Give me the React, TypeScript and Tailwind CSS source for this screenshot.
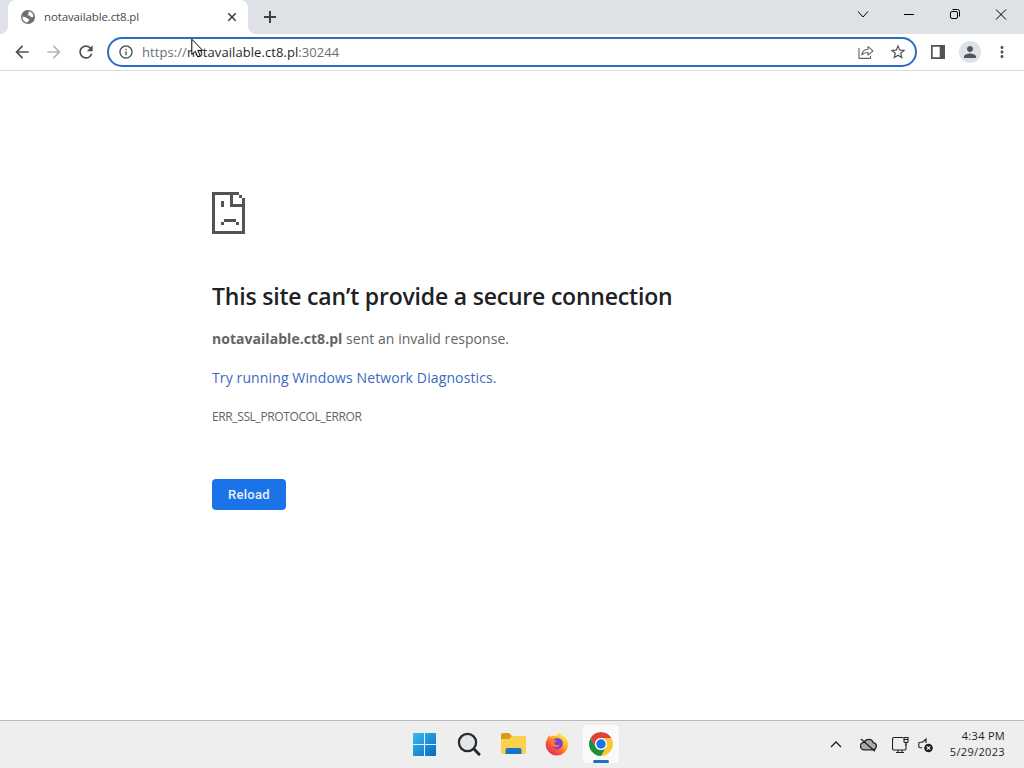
import type { ReactNode } from 'react';
import { MdArrowBack, MdArrowForward, MdRefresh, MdStarBorder, MdPerson, MdMoreVert, MdInfoOutline } from 'react-icons/md';

function WindowControls() {
  return (
    <div className="ml-auto flex h-7 items-center text-black">
      <svg className="w-[46px] h-7" viewBox="0 0 46 28" fill="none" stroke="currentColor">
        <path d="M18 11.5l5 5.5 5-5.5" />
      </svg>
      <svg className="w-[46px] h-7" viewBox="0 0 46 28" fill="none" stroke="currentColor">
        <path d="M18 14.5h10" />
      </svg>
      <svg className="w-[46px] h-7" viewBox="0 0 46 28" fill="none" stroke="currentColor">
        <rect x="18.5" y="11.5" width="7" height="7" rx="1.5" />
        <path d="M20.5 9.5h5a2 2 0 0 1 2 2v5" />
      </svg>
      <svg className="w-[46px] h-7" viewBox="0 0 46 28" fill="none" stroke="currentColor">
        <path d="M18 9.5l10 10M28 9.5l-10 10" />
      </svg>
    </div>
  );
}

function GlobeIcon() {
  return (
    <svg className="size-4" viewBox="0 0 16 16">
      <circle cx="8" cy="8" r="7" fill="#6b6f73" />
      <path d="M8.500 2.500c2.500 0 4.800 2 5 5-.7.7-1.700.9-2.500.5-.8-.5-.6-1.300-1.500-1.500-.8-.1-1.600.1-1.700-.8 0-.8.8-.8 1-1.500.1-.6-.5-1-.3-1.700z" fill="#fff" />
      <path d="M2.300 7.800c1.500-.2 2.800 0 4 .6.900.5 1.100 1.300 2.200 1.500.9.200 1 .9.600 1.500-.5.700-1.300.6-1.500 1.300-.1.400-.1.700-.2 1A5.800 5.800 0 0 1 2.300 7.800z" fill="#fff" />
    </svg>
  );
}

function TabStrip() {
  return (
    <div className="flex h-[34px] bg-[#dee1e6]">
      <div className="w-2 bg-white">
        <div className="h-full rounded-br-lg bg-[#dee1e6]" />
      </div>
      <div className="flex w-60 items-center rounded-t-lg bg-white pl-3 pr-[10px]">
        <GlobeIcon />
        <span className="ml-2 whitespace-nowrap font-['Open_Sans',sans-serif] text-[11.5px] tracking-[-0.12px] text-[#45494d]">
          notavailable.ct8.pl
        </span>
        <svg className="ml-auto size-3" viewBox="0 0 12 12" fill="none" stroke="#3c4043" strokeWidth="1.6">
          <path d="M2.300 2.300l7.400 7.400M9.700 2.300l-7.400 7.400" />
        </svg>
      </div>
      <div className="w-2 bg-white">
        <div className="h-full rounded-bl-lg bg-[#dee1e6]" />
      </div>
      <svg className="ml-2 mt-[11px] size-3" viewBox="0 0 12 12" stroke="#3c4043" strokeWidth="2">
        <path d="M6 0v12M0 6h12" />
      </svg>
      <WindowControls />
    </div>
  );
}

function Toolbar() {
  return (
    <div className="flex h-[37px] items-center border-b border-[#d8dadd] bg-white pl-3 text-[#4d5155]">
      <MdArrowBack className="size-5" />
      <MdArrowForward className="ml-3 size-5 text-[#b4b6b8]" />
      <MdRefresh className="ml-3 size-5" />
      <div className="ml-[11px] flex h-[30px] w-[810px] items-center rounded-full border-2 border-[#2b6cc4] pl-[9px] pr-2">
        <MdInfoOutline className="size-4" />
        <span className="ml-2 mt-px whitespace-nowrap font-['Open_Sans',sans-serif] text-[13px] tracking-[0.07px] text-[#6a6e72]">
          https://<span className="text-[#26282b]">notavailable.ct8.pl</span>:30244
        </span>
        <svg className="ml-auto h-4 w-4" viewBox="0 0 16 16" fill="none" stroke="#5f6368" strokeWidth="1.1">
          <path d="M1 4v10.400h11.500v-2.500" />
          <path d="M3.800 11c.4-3.700 2.700-5.600 6.200-5.700V2.600l5 4.300-5 4.300V8.500C7 8.500 5.300 9.200 3.800 11z" strokeLinejoin="round" />
        </svg>
        <MdStarBorder className="ml-[15px] size-[18px]" />
      </div>
      <svg className="ml-[14px] h-[14px] w-[14px]" viewBox="0 0 14 14">
        <path d="M0 0h14v14H0zM1.700 1.700v10.600h7V1.700z" fill="#505458" fillRule="evenodd" />
      </svg>
      <div className="ml-[14px] flex size-[22px] items-center justify-center rounded-full bg-[#dee1e6]">
        <MdPerson className="size-[18px] text-[#4d5663]" />
      </div>
      <MdMoreVert className="ml-3 size-[18px]" />
    </div>
  );
}

function Cursor() {
  return (
    <svg className="absolute left-[191px] top-[38px] h-[21px] w-[13px]" viewBox="0 0 13 21">
      <path d="M.8 1.200v15.300l3.500-3.300 2.400 5.600 2.500-1.100-2.400-5.300h4.900z" fill="#fff" stroke="#000" />
    </svg>
  );
}

function SadPage() {
  return (
    <svg className="h-[42px] w-[33px]" viewBox="0 0 11 14" fill="#535353" shapeRendering="crispEdges">
      <path d="M0 0h9v1H7v3h3V2h1v12H0zM1 1v12h9V5H6V1zM9 1h1v1H9zM3 3h1v2H3zM4 9h4v1H4zM3 10h1v1H3zM8 10h1v1H8z" fillRule="evenodd" />
    </svg>
  );
}

function ErrorPage() {
  return (
    <main className="h-[649px] bg-white pl-[212px] pt-[121px] font-['Open_Sans',sans-serif] text-[#646464]">
      <SadPage />
      <h1 className="mt-[46px] w-max text-[23px] font-semibold leading-[32px] tracking-[-0.2px] text-[#202124]">
        This site can’t provide a secure connection
      </h1>
      <p className="mt-[15px] w-max text-[14px] leading-6 tracking-[0.04px]">
        <strong className="font-bold">notavailable.ct8.pl</strong> sent an invalid response.
      </p>
      <p className="mt-[15px] w-max text-[14px] leading-6 tracking-[0.12px] text-[#3d68c0]">
        Try running Windows Network Diagnostics.
      </p>
      <p className="mt-[15px] w-max text-[12px] leading-6 tracking-[-0.38px]">ERR_SSL_PROTOCOL_ERROR</p>
      <button className="mt-[50px] block h-[31px] w-[74px] rounded bg-[#1a73e8] font-[Roboto,sans-serif] text-[13px] font-medium tracking-[0.3px] text-[#e8f1fd]">
        Reload
      </button>
    </main>
  );
}

function StartIcon() {
  return (
    <svg className="size-[23px]" viewBox="0 0 23 23">
      <defs>
        <linearGradient id="win" x1="0" y1="0" x2="1" y2="1">
          <stop offset="0" stopColor="#35bdf1" />
          <stop offset="1" stopColor="#0768c4" />
        </linearGradient>
      </defs>
      <path d="M1 0h10v11H0V1a1 1 0 0 1 1-1zM12 0h10a1 1 0 0 1 1 1v10H12zM0 12h11v11H1a1 1 0 0 1-1-1zM12 12h11v10a1 1 0 0 1-1 1H12z" fill="url(#win)" />
    </svg>
  );
}

function SearchIcon() {
  return (
    <svg className="size-6" viewBox="0 0 24 24" fill="none">
      <circle cx="10.500" cy="10.500" r="8.600" fill="#e3e6e8" stroke="#2a2b2d" strokeWidth="2.300" />
      <path d="M17 17l5 5.200" stroke="#2a2b2d" strokeWidth="3" strokeLinecap="round" />
    </svg>
  );
}

function FolderIcon() {
  return (
    <svg className="h-[22px] w-[25px]" viewBox="0 0 25 22">
      <path d="M0 2a2 2 0 0 1 2-2h6l3 3h12a2 2 0 0 1 2 2v5H0z" fill="#d99a14" />
      <path d="M0 6h8l3-3h12a2 2 0 0 1 2 2v14a2 2 0 0 1-2 2H2a2 2 0 0 1-2-2z" fill="#fbd04e" />
      <path d="M4.500 21v-4a2 2 0 0 1 2-2h12a2 2 0 0 1 2 2v4z" fill="#1775c9" />
      <path d="M8 19h9" stroke="#1566ad" />
    </svg>
  );
}

function FirefoxIcon() {
  return (
    <svg className="size-6" viewBox="0 0 24 24">
      <defs>
        <linearGradient id="fox" x1="0.850" y1="0.100" x2="0.200" y2="0.950">
          <stop offset="0" stopColor="#fff04a" />
          <stop offset="0.350" stopColor="#ffb225" />
          <stop offset="0.650" stopColor="#ff5a32" />
          <stop offset="1" stopColor="#e92664" />
        </linearGradient>
      </defs>
      <path d="M2 7.500C2.400 5.600 3.500 4 4.800 3c0 1 .2 1.700.7 2.300C7 4 8.700 3.600 10 3.800 11.400 3.500 13 2.600 14 .7c1.700 1 3 2.500 3.500 4.300.7-.2.800-.7.700-1.500 3.100 2.200 5 5.400 5 9.200A11.300 11.300 0 0 1 12 23.500 11.300 11.300 0 0 1 .7 12.500C.7 10.700 1 9 2 7.500z" fill="url(#fox)" />
      <circle cx="12.300" cy="11.500" r="5.500" fill="#7742d0" />
      <path d="M4.500 8c2-1.500 3.500-1.300 4.700-.1l2.300.8c-.2 1.200-1.700 1.400-2.200 2.100-.2 1.300.8 2.400 2.200 2.300 1.500-.1 2.400-.6 3.200-.2-.9 1.900-3 2.600-5.300 2-3.300-.8-4.900-3.500-4.900-6.900z" fill="#ff7830" />
    </svg>
  );
}

function ChromeIcon() {
  return (
    <svg className="size-6" viewBox="0 0 24 24">
      <path d="M12 6h10.390A12 12 0 0 1 12 24l5.200-9z" fill="#fcc934" />
      <path d="M1.610 6l5.190 9A6 6 0 0 0 17.200 15L12 24A12 12 0 0 1 1.610 6z" fill="#1e8e3e" />
      <path d="M1.610 6A12 12 0 0 1 22.390 6H12a6 6 0 0 0-5.200 9z" fill="#db4437" />
      <circle cx="12" cy="12" r="6" fill="#fff" />
      <circle cx="12" cy="12" r="4.700" fill="#1a73e8" />
    </svg>
  );
}

function TaskButton({ active = false, children }: { active?: boolean; children: ReactNode }) {
  return (
    <div className={active
      ? 'relative flex h-[38px] w-9 items-center justify-center rounded bg-[#fafafa]'
      : 'flex h-[38px] w-9 items-center justify-center'}
    >
      {children}
      {active && <div className="absolute bottom-0 left-[10px] h-[3px] w-4 rounded-full bg-[#226fc0]" />}
    </div>
  );
}

function Tray() {
  return (
    <div className="ml-auto flex h-full items-center pr-[19px] text-[#1f1f1f]">
      <svg className="h-[7px] w-3" viewBox="0 0 12 7" fill="none" stroke="currentColor" strokeWidth="1.300">
        <path d="M1 6l5-5 5 5" />
      </svg>
      <svg className="ml-[18px] h-[14px] w-[17px]" viewBox="0 0 17 14" fill="none" stroke="currentColor" strokeWidth="1.300">
        <path d="M4.300 11.800a3.700 3.700 0 0 1-.2-7.400C5 2.200 6.800 1.300 8.700 1.300c2.300 0 4 1.400 4.500 3.400 1.900.2 3.100 1.600 3.100 3.400 0 2.100-1.500 3.700-3.500 3.700z" fill="#aaa" />
        <path d="M1 1l14 12.300" />
      </svg>
      <svg className="ml-[15px] h-[18px] w-[17px]" viewBox="0 0 17 18" fill="none" stroke="currentColor" strokeWidth="1.100">
        <path d="M11 1.500H2A1.500 1.500 0 0 0 .5 3v9.500A1.500 1.500 0 0 0 2 14h10.500a1.500 1.500 0 0 0 1.500-1.500V7.500M4 16.500h8M6 14v2.500M10 14v2.500" />
        <path d="M12 1.500h4v4a1 1 0 0 1-1 1h-2a1 1 0 0 1-1-1zM14 6.500v3M12 3.500h4" />
      </svg>
      <svg className="ml-[9px] h-4 w-4" viewBox="0 0 16 16" fill="none" stroke="currentColor" strokeWidth="1.100">
        <path d="M8 6V2L4.500 5.200H2A1.200 1.200 0 0 0 .8 6.400v3.200A1.200 1.200 0 0 0 2 10.800h2.200" />
        <circle cx="10.500" cy="11" r="4.300" fill="#1f1f1f" stroke="none" />
        <path d="M8.800 9.300l3.400 3.400M12.200 9.300l-3.400 3.400" stroke="#fff" />
      </svg>
      <div className="ml-4 pb-px text-right font-['Open_Sans',sans-serif] text-[11px] leading-4">
        <div className="tracking-[0.3px]">4:34 PM</div>
        <div className="tracking-[0.35px]">5/29/2023</div>
      </div>
    </div>
  );
}

function Taskbar() {
  return (
    <div className="flex h-12 border-t border-[#b9b9b9] bg-[#eeeeee]">
      <div className="ml-[406px] mt-[4px] flex gap-2">
        <TaskButton><StartIcon /></TaskButton>
        <div className="ml-px flex gap-2">
          <TaskButton><SearchIcon /></TaskButton>
          <TaskButton><FolderIcon /></TaskButton>
          <TaskButton><FirefoxIcon /></TaskButton>
          <TaskButton active><ChromeIcon /></TaskButton>
        </div>
      </div>
      <Tray />
    </div>
  );
}

export default function App() {
  return (
    <div className="relative h-[768px] w-[1024px] overflow-hidden bg-white">
      <TabStrip />
      <Toolbar />
      <ErrorPage />
      <Taskbar />
      <Cursor />
    </div>
  );
}
